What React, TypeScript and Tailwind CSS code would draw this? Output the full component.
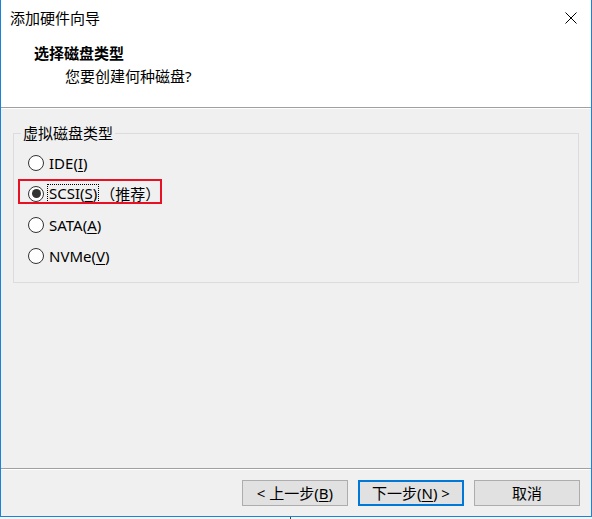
import React from 'react';

const FONT = { fontFamily: '"Noto Sans", "Noto Sans CJK SC", sans-serif' };

type Opt = { label: string; key: string; rest: string; checked?: boolean };

const OPTIONS: Opt[] = [
  { label: 'IDE(', key: 'I', rest: ')' },
  { label: 'SCSI(', key: 'S', rest: ')', checked: true },
  { label: 'SATA(', key: 'A', rest: ')' },
  { label: 'NVMe(', key: 'V', rest: ')' },
];

function Radio({ checked }: { checked?: boolean }) {
  return (
    <span className="flex h-[16px] w-[16px] shrink-0 items-center justify-center rounded-full border border-[#333333] bg-white">
      {checked && <span className="h-[9px] w-[9px] rounded-full bg-[#333333]" />}
    </span>
  );
}

function Button({ children, primary }: { children: React.ReactNode; primary?: boolean }) {
  return (
    <button
      className={
        primary
          ? 'flex h-[26px] w-[106px] items-center justify-center border-2 border-[#0078d7] bg-[#e1e1e1] text-[15px] leading-none text-black'
          : 'flex h-[26px] w-[106px] items-center justify-center border border-[#adadad] bg-[#e1e1e1] text-[15px] leading-none text-black'
      }
    >
      {children}
    </button>
  );
}

export default function App() {
  return (
    <div className="flex h-[519px] w-[592px] flex-col bg-white text-black" style={FONT}>
      <div className="flex h-[517px] flex-col border-x border-b border-[#1883d7] bg-[#f0f0f0]">
        {/* header */}
        <div className="h-[107px] bg-white">
          <div className="flex h-[35px] items-center justify-between pl-[9px] pr-[14px]">
            <span className="text-[15px] leading-[20px]">添加硬件向导</span>
            <svg width="12" height="12" viewBox="0 0 12 12" className="mt-[1px]">
              <path d="M0.5 0.5 L11.5 11.5 M11.5 0.5 L0.5 11.5" stroke="#000" strokeWidth="1" />
            </svg>
          </div>
          <div className="mt-[8px] pl-[33px] text-[15px] font-bold leading-[20px]">选择磁盘类型</div>
          <div className="mt-[3px] pl-[64px] text-[15px] leading-[20px]">您要创建何种磁盘?</div>
        </div>
        <div className="h-px bg-[#a0a0a0]" />
        <div className="h-px bg-white" />

        {/* body */}
        <div className="h-[359px] pt-[14px]">
          <fieldset className="ml-[12px] w-[566px] border border-[#dcdcdc] pb-[11px] pl-[14px] pt-[4px]">
            <legend className="-ml-[7px] px-[2px] text-[15px] leading-[20px]">虚拟磁盘类型</legend>
            {OPTIONS.map((o) => (
              <div key={o.label} className="relative flex h-[31px] items-center gap-[4px] text-[15px]">
                <Radio checked={o.checked} />
                {o.checked ? (
                  <>
                    <span className="inline-block h-[17px] pl-px pr-px leading-[17px] outline outline-1 outline-dotted outline-black">
                      {o.label}
                      <u className="underline-offset-2">{o.key}</u>
                      {o.rest}
                    </span>
                    <span className="-ml-[2px] leading-[20px]">（推荐）</span>
                    <span className="pointer-events-none absolute left-[-10px] top-[1px] h-[25px] w-[144px] border-2 border-[#e81123]" />
                  </>
                ) : (
                  <span className="pl-px leading-[20px]">
                    {o.label}
                    <u className="underline-offset-2">{o.key}</u>
                    {o.rest}
                  </span>
                )}
              </div>
            ))}
          </fieldset>
        </div>

        <div className="h-px bg-[#a0a0a0]" />
        <div className="h-px bg-white" />

        {/* footer */}
        <div className="flex h-[46px] justify-end gap-[10px] pr-[11px] pt-[10px]">
          <Button>
            &lt; 上一步(<u className="underline-offset-2">B</u>)
          </Button>
          <Button primary>
            下一步(<u className="underline-offset-2">N</u>) &gt;
          </Button>
          <Button>取消</Button>
        </div>
      </div>
      <div className="flex h-[2px] bg-[#f4f4f4]">
        <div className="ml-[290px] w-px bg-[#404040]" />
      </div>
    </div>
  );
}
